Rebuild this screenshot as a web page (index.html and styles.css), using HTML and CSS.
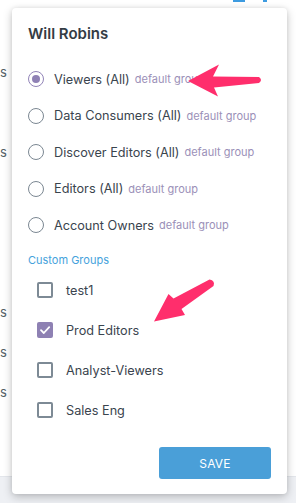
FILE: index.html
```html
<!DOCTYPE html>
<html lang="en">
<head>
    <meta charset="UTF-8">
    <meta name="viewport" content="width=device-width, initial-scale=1.0">
    <title>Group Access</title>
    <link rel="stylesheet" href="styles.css">
</head>
<body>
    <div class="page">
        <div class="top-icons">
            <span class="icon-bit wide"></span>
            <span class="icon-bit"></span>
        </div>
        <div class="behind">
            <div class="behind-row r1">s</div>
            <div class="behind-row r2">s</div>
            <div class="behind-row r3">s</div>
            <div class="behind-row r4">s</div>
            <div class="behind-row r5">s</div>
        </div>
        <div class="footer-band"></div>
    </div>

    <div class="popover">
        <h2 class="popover-title">Will Robins</h2>

        <div class="group-list">
            <label class="radio-row">
                <span class="radio checked"></span>
                <span class="row-name">Viewers (All)</span>
                <span class="row-tag">default group</span>
            </label>
            <label class="radio-row">
                <span class="radio"></span>
                <span class="row-name">Data Consumers (All)</span>
                <span class="row-tag">default group</span>
            </label>
            <label class="radio-row">
                <span class="radio"></span>
                <span class="row-name">Discover Editors (All)</span>
                <span class="row-tag">default group</span>
            </label>
            <label class="radio-row">
                <span class="radio"></span>
                <span class="row-name">Editors (All)</span>
                <span class="row-tag">default group</span>
            </label>
            <label class="radio-row">
                <span class="radio"></span>
                <span class="row-name">Account Owners</span>
                <span class="row-tag">default group</span>
            </label>
        </div>

        <div class="section-label">Custom Groups</div>

        <div class="custom-list">
            <label class="check-row">
                <span class="checkbox"></span>
                <span class="row-name">test1</span>
            </label>
            <label class="check-row">
                <span class="checkbox checked">
                    <svg width="12" height="12" viewBox="0 0 12 12"><path d="M2 6.2 L4.8 9 L10.2 3.2" fill="none" stroke="#fff" stroke-width="1.8" stroke-linecap="round" stroke-linejoin="round"/></svg>
                </span>
                <span class="row-name">Prod Editors</span>
            </label>
            <label class="check-row">
                <span class="checkbox"></span>
                <span class="row-name">Analyst-Viewers</span>
            </label>
            <label class="check-row">
                <span class="checkbox"></span>
                <span class="row-name">Sales Eng</span>
            </label>
        </div>

        <div class="actions">
            <button class="save-button">SAVE</button>
        </div>
    </div>

    <!-- annotation arrows -->
    <svg class="annotations" width="296" height="503" viewBox="0 0 296 503">
        <path d="M188 81 L219 64.5 L213 76.5 L259 77 Q263 80 259 83 L214 87.5 L218 96.5 Z" fill="#ff2e6c"/>
        <path d="M154 321.5 L168.5 294 L173.5 298.5 L209.5 279.5 Q215.5 280.5 213.5 286 L181.5 309 L185 315 Z" fill="#ff2e6c"/>
    </svg>
</body>
</html>
```

FILE: styles.css
```css
* { margin: 0; padding: 0; box-sizing: border-box; }
html, body { width: 296px; height: 503px; overflow: hidden; }
body {
    font-family: "Inter", "Roboto", sans-serif;
    background: #fff;
    color: #39434d;
    position: relative;
}
.page { height: 503px; display: flex; flex-direction: column; }
.top-icons { display: flex; gap: 18px; padding-left: 233px; height: 2px; }
.icon-bit { width: 4px; height: 2px; background: #3d9be0; }
.icon-bit.wide { width: 12px; }
.behind { flex: 1; }
.behind-row {
    font-size: 13px;
    line-height: 16px;
    color: #555e66;
}
.behind-row.r1 { margin-top: 62px; }
.behind-row.r2 { margin-top: 64px; }
.behind-row.r3 { margin-top: 144px; }
.behind-row.r4 { margin-top: 24px; }
.behind-row.r5 { margin-top: 24px; }
.footer-band {
    height: 27px;
    background: #eef0f4;
    border-top: 1px solid #e3e6eb;
}

.popover {
    position: absolute;
    left: 12px;
    top: 8px;
    width: 275px;
    height: 486px;
    background: #fff;
    border-radius: 4px;
    box-shadow: 0 3px 10px rgba(0,0,0,0.22), 0 0 4px rgba(0,0,0,0.08);
    padding: 16px 16px 15px 16px;
    display: flex;
    flex-direction: column;
}
.popover-title {
    font-size: 15px;
    line-height: 20px;
    font-weight: 600;
    color: #343c44;
}
.group-list { margin-top: 16.75px; display: flex; flex-direction: column; }
.radio-row {
    height: 36.5px;
    display: flex;
    align-items: center;
    white-space: nowrap;
}
.radio {
    width: 16px;
    height: 16px;
    border: 1.5px solid #7b8792;
    border-radius: 50%;
    margin-right: 10px;
    flex-shrink: 0;
    display: flex;
    align-items: center;
    justify-content: center;
}
.radio.checked { border-color: #9284b8; }
.radio.checked::after {
    content: "";
    width: 8px;
    height: 8px;
    border-radius: 50%;
    background: #8f81b5;
}
.row-name { font-size: 12.7px; color: #3a444e; }
.row-tag { font-size: 11px; color: #9b90b8; margin-left: 5px; }

.section-label {
    margin-top: 8.75px;
    font-size: 11px;
    line-height: 16px;
    color: #45a2dc;
}
.custom-list { margin-top: 2px; display: flex; flex-direction: column; }
.check-row {
    height: 40px;
    display: flex;
    align-items: center;
    padding-left: 9px;
}
.checkbox {
    width: 16px;
    height: 16px;
    border: 2px solid #7d8a95;
    border-radius: 2px;
    margin-right: 13px;
    flex-shrink: 0;
    display: flex;
    align-items: center;
    justify-content: center;
}
.checkbox.checked { background: #8e81b3; border-color: #8e81b3; }

.actions { margin-top: auto; display: flex; justify-content: flex-end; }
.save-button {
    width: 112px;
    height: 32px;
    border: none;
    border-radius: 3px;
    background: #4a9fd8;
    color: #fff;
    font-family: inherit;
    font-size: 12px;
    letter-spacing: 0.2px;
}

.annotations { position: absolute; left: 0; top: 0; pointer-events: none; }
```
